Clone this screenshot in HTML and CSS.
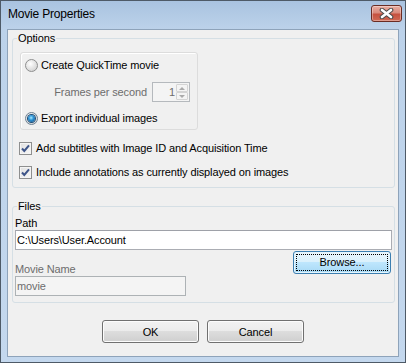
FILE: index.html
```html
<!DOCTYPE html>
<html lang="en">

<head>
    <meta charset="UTF-8">
    <meta name="viewport" content="width=device-width, initial-scale=1.0">
    <title>Movie Properties</title>
    <link rel="stylesheet" href="styles.css">
</head>

<body>
    <div class="window">
        <div class="titlebar">
            <span class="titlebar__title">Movie Properties</span>
            <span class="titlebar__close">
                <svg width="15" height="11" viewBox="0 0 15 11">
                    <path d="M3 2 L12 9 M12 2 L3 9" stroke="#4b4b4b" stroke-width="4.6" stroke-linecap="round" fill="none" />
                    <path d="M3 2 L12 9 M12 2 L3 9" stroke="#fff" stroke-width="2.6" stroke-linecap="round" fill="none" />
                </svg>
            </span>
        </div>
        <div class="client">
            <fieldset class="group options">
                <legend>Options</legend>
                <div class="mode">
                    <label class="option">
                        <span class="radio"></span>Create QuickTime movie
                    </label>
                    <div class="fps">
                        <span class="muted">Frames per second</span>
                        <span class="spin">
                            <span class="spin__value">1</span>
                            <span class="spin__arrows">
                                <span class="spin__btn"><span class="spin__up"></span></span>
                                <span class="spin__btn"><span class="spin__down"></span></span>
                            </span>
                        </span>
                    </div>
                    <label class="option option--last">
                        <span class="radio radio--on"></span>Export individual images
                    </label>
                </div>
                <label class="check-row check-row--first">
                    <span class="check">
                        <svg width="11" height="11" viewBox="0 0 11 11">
                            <path d="M2 5.5 L4.3 8 L9 2.3" stroke="#3d5488" stroke-width="2" fill="none" />
                        </svg>
                    </span>Add subtitles with Image ID and Acquisition Time
                </label>
                <label class="check-row">
                    <span class="check">
                        <svg width="11" height="11" viewBox="0 0 11 11">
                            <path d="M2 5.5 L4.3 8 L9 2.3" stroke="#3d5488" stroke-width="2" fill="none" />
                        </svg>
                    </span>Include annotations as currently displayed on images
                </label>
            </fieldset>

            <fieldset class="group files">
                <legend>Files</legend>
                <div class="field-label">Path</div>
                <div class="textbox">C:\Users\User.Account</div>
                <div class="files__row">
                    <div class="files__name">
                        <div class="field-label muted">Movie Name</div>
                        <div class="textbox textbox--disabled">movie</div>
                    </div>
                    <button class="button button--focus"><span class="button__focus">Browse...</span></button>
                </div>
            </fieldset>

            <div class="actions">
                <button class="button">OK</button>
                <button class="button">Cancel</button>
            </div>
        </div>
    </div>
</body>

</html>
```

FILE: styles.css
```css
body {
    margin: 0;
    font-family: 'Liberation Sans', Arial, sans-serif;
    font-size: 11px;
    letter-spacing: -0.12px;
    color: #000;
}

.window {
    width: 406px;
    height: 363px;
    box-sizing: border-box;
    border: 1px solid #4e5a67;
    background: linear-gradient(to bottom, #a9c3e0 0px, #bcd2ea 28px, #c4d8ee 100%);
    display: flex;
    flex-direction: column;
}

.titlebar {
    height: 28px;
    display: flex;
    justify-content: space-between;
    align-items: flex-start;
}

.titlebar__title {
    font-size: 12px;
    letter-spacing: -0.2px;
    line-height: 16px;
    margin: 5px 0 0 7px;
}

.titlebar__close {
    width: 31px;
    height: 17px;
    box-sizing: border-box;
    margin: 4px 3px 0 0;
    border: 1px solid #6a2c24;
    border-radius: 3px;
    background: linear-gradient(to bottom, #e9aea3 0%, #d98a7c 45%, #c6513f 55%, #d06a55 100%);
    box-shadow: inset 0 0 0 1px rgba(255, 255, 255, 0.35);
    display: flex;
    align-items: center;
    justify-content: center;
}

.client {
    height: 326px;
    margin: 0 6px;
    border: 1px solid #8ea3ba;
    background-color: #f0f0f0;
}

.group {
    margin: 0 3px 0 4px;
    padding: 0;
    border: 1px solid #d5dfe5;
    border-radius: 3px;
    min-width: 0;
}

.group legend {
    margin-left: 4px;
    padding: 0 1px;
    line-height: 13px;
}

.options {
    margin-top: 2px;
}

.mode {
    width: 178px;
    box-sizing: border-box;
    margin: 7px 0 0 7px;
    padding: 6px 7px 4px 4px;
    border: 1px solid #dcdcdc;
    border-radius: 3px;
    box-shadow: inset 1px 1px 0 #fff;
}

.option {
    display: flex;
    align-items: center;
    height: 13px;
    line-height: 13px;
}

.option--last {
    margin-top: 10px;
}

.radio {
    width: 13px;
    height: 13px;
    box-sizing: border-box;
    margin-right: 3px;
    border: 1px solid #8e8f8f;
    border-radius: 50%;
    background: radial-gradient(circle at 40% 35%, #ffffff 0%, #e6e6e6 45%, #c9c9c9 100%);
    display: flex;
    align-items: center;
    justify-content: center;
}

.radio--on {
    border-color: #6d8193;
}

.radio--on::after {
    content: '';
    width: 7px;
    height: 7px;
    border-radius: 50%;
    background: radial-gradient(circle at 45% 40%, #a9ecff 0%, #2f95d8 40%, #0c4479 100%);
    box-shadow: 0 0 0 1px #1c4d77;
}

.fps {
    margin-top: 10px;
    height: 20px;
    display: flex;
    align-items: center;
    justify-content: flex-end;
    gap: 5px;
}

.muted {
    color: #6d6d6d;
}

.spin {
    width: 38px;
    height: 20px;
    box-sizing: border-box;
    border: 1px solid #b5b9bd;
    background-color: #f4f4f4;
    display: flex;
    align-items: stretch;
    padding: 1px;
}

.spin__value {
    flex: 1;
    text-align: right;
    color: #6d6d6d;
    line-height: 16px;
    padding-right: 1px;
}

.spin__arrows {
    width: 12px;
    display: flex;
    flex-direction: column;
}

.spin__btn {
    flex: 1;
    border: 1px solid #d4d4d4;
    border-radius: 1px;
    background-color: #f4f4f4;
    display: flex;
    align-items: center;
    justify-content: center;
}

.spin__up {
    border-left: 3px solid transparent;
    border-right: 3px solid transparent;
    border-bottom: 3px solid #aaa;
}

.spin__down {
    border-left: 3px solid transparent;
    border-right: 3px solid transparent;
    border-top: 3px solid #aaa;
}

.check-row {
    display: flex;
    align-items: center;
    height: 13px;
    line-height: 13px;
    margin: 11px 0 0 6px;
}

.check-row--first {
    margin-top: 12px;
}

.check-row:last-child {
    margin-bottom: 8px;
}

.check {
    width: 13px;
    height: 13px;
    box-sizing: border-box;
    margin-right: 4px;
    border: 1px solid #8e8f8f;
    background: linear-gradient(135deg, #e0e0e0 0%, #f7f7f7 100%);
    box-shadow: inset 0 0 0 1px #f4f4f4;
    display: flex;
    align-items: center;
    justify-content: center;
}

.files {
    margin-top: 12px;
}

.field-label {
    margin: 4px 0 0 2px;
    height: 13px;
    line-height: 13px;
}

.textbox {
    margin: 0 2px;
    height: 20px;
    box-sizing: border-box;
    border: 1px solid #abadb3;
    border-top-color: #9ea1a8;
    background-color: #fff;
    padding-left: 1px;
    line-height: 18px;
}

.textbox--disabled {
    margin: 0;
    width: 171px;
    border-color: #adb2b5;
    background-color: #f4f4f4;
    color: #6d6d6d;
}

.files__row {
    display: flex;
    justify-content: space-between;
    align-items: flex-start;
    margin: 0 3px 6px 2px;
}

.files__name .field-label {
    margin: 13px 0 0 0;
}

.button {
    width: 97px;
    height: 23px;
    box-sizing: border-box;
    padding: 0;
    border: 1px solid #707070;
    border-radius: 3px;
    background: linear-gradient(to bottom, #f2f2f2 0%, #ebebeb 50%, #dddddd 50%, #cfcfcf 100%);
    box-shadow: inset 0 0 0 1px #fcfcfc;
    font-family: 'Liberation Sans', Arial, sans-serif;
    font-size: 11px;
    letter-spacing: -0.12px;
    color: #000;
}

.button--focus {
    width: 98px;
    margin-top: 1px;
    padding: 2px;
    border-color: #3c7fb1;
    background: linear-gradient(to bottom, #eaf6fd 0%, #d9f0fc 50%, #bee6fd 50%, #a7d9f5 100%);
    box-shadow: inset 0 0 0 1px #e4f4fc;
    display: flex;
}

.button__focus {
    flex: 1;
    border: 1px dotted #000;
    line-height: 15px;
}

.actions {
    margin-top: 17px;
    display: flex;
    justify-content: center;
    gap: 8px;
}
```
